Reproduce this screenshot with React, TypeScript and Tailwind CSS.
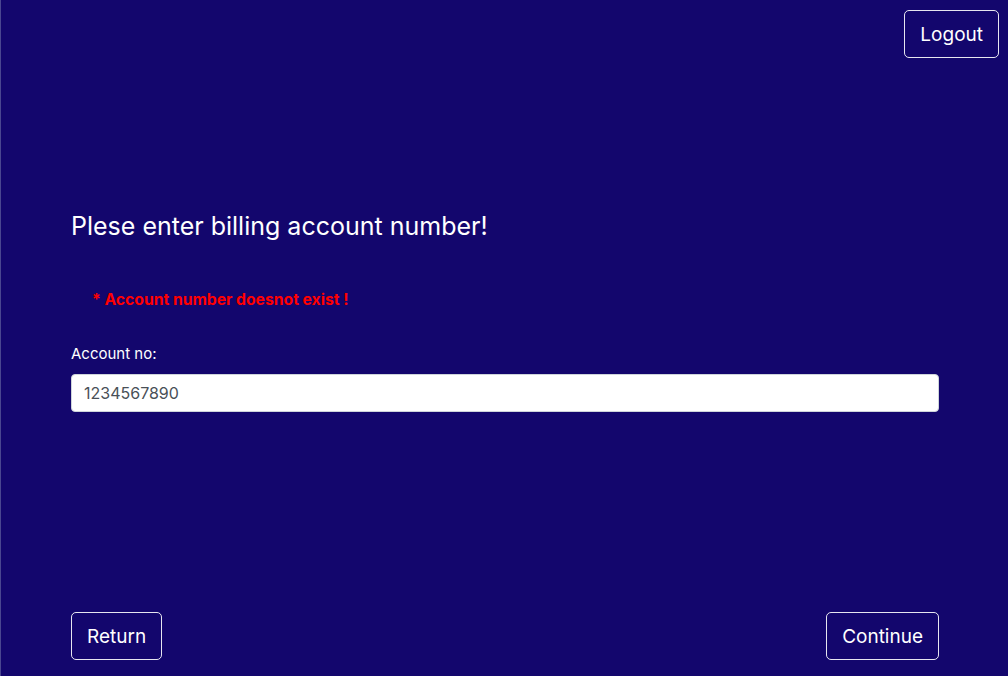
import { useState } from "react";

// ── Outline button ─────────────────────────────────────────────────────────────

function OutlineButton({ label }: { label: string }) {
  return (
    <button
      type="button"
      className="h-[48px] rounded-[5px] border border-white/90 px-[15px] pt-[2px] text-[19px] leading-[1.5] text-white hover:bg-white/10"
    >
      {label}
    </button>
  );
}

// ── Page ───────────────────────────────────────────────────────────────────────

export default function App() {
  const [account, setAccount] = useState("");

  return (
    <div
      className="flex h-[676px] w-full flex-col border-l border-[#4a4690] bg-[#13066d] text-white"
      style={{ fontFamily: "Inter, 'Noto Sans', sans-serif" }}
    >
      {/* Header */}
      <div className="flex justify-end pr-[9px] pt-[10px]">
        <OutlineButton label="Logout" />
      </div>

      {/* Form */}
      <div className="flex flex-1 flex-col px-[70px]">
        <h3 className="mt-[153px] text-[25px] leading-[30px] font-normal">
          Plese enter billing account number!
        </h3>

        <p className="mt-[49px] pl-[21px] text-[15.7px] leading-[20px] font-bold text-[#ff0000]">
          * Account number doesnot exist !
        </p>

        <label htmlFor="account" className="mt-[34px] text-[15px] leading-[20px]">
          Account no:
        </label>
        <input
          id="account"
          value={account}
          onChange={e => setAccount(e.target.value)}
          placeholder="1234567890"
          className="mt-[10px] h-[38px] w-[868px] rounded-[4px] border border-[#ced4da] bg-white px-3 text-[16px] text-[#495057] placeholder:text-[#495057] outline-none"
        />

        <div className="mt-auto mb-[16px] flex w-[868px] justify-between">
          <OutlineButton label="Return" />
          <OutlineButton label="Continue" />
        </div>
      </div>
    </div>
  );
}
